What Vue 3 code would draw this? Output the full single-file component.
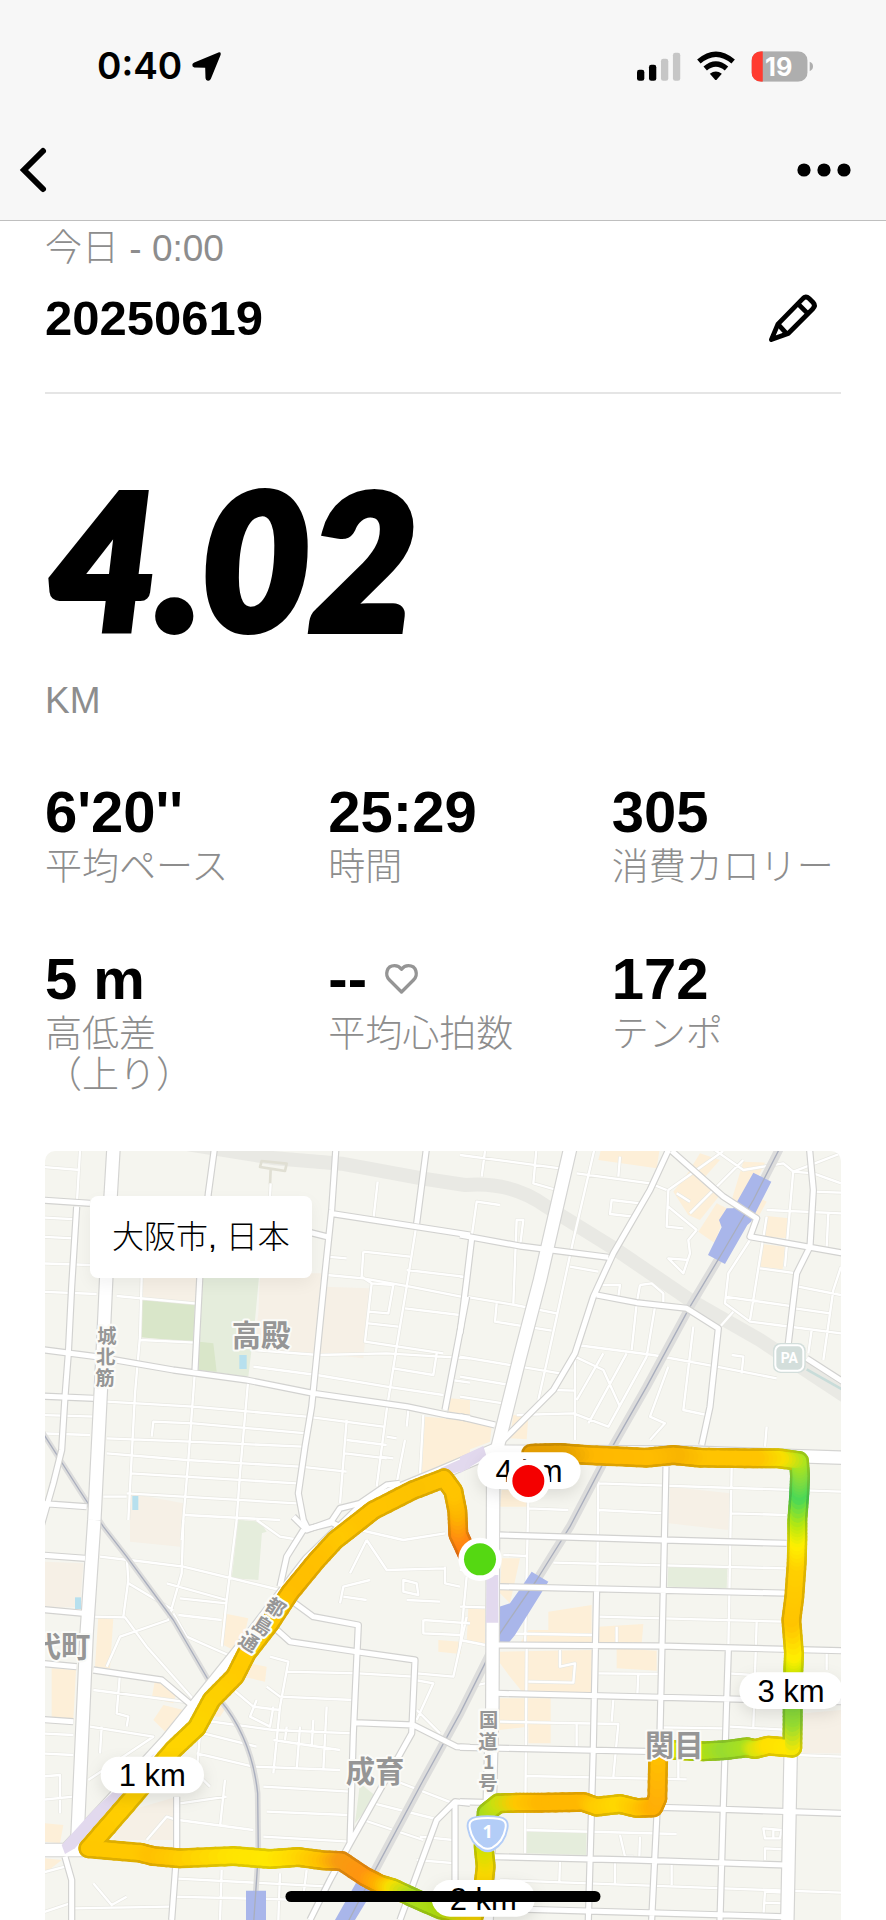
<script setup>
const stats = [
  { value: "6'20''", label: '平均ペース' },
  { value: '25:29', label: '時間' },
  { value: '305', label: '消費カロリー' },
  { value: '5 m', label: '高低差\n（上り）' },
  { value: '--', label: '平均心拍数', heart: true },
  { value: '172', label: 'テンポ' },
]

// The map is drawn in four quadrants, each with its own origin.
const tiles = [
  {
    at: 'translate(-15 -33)',
    major: 'M222 0L204 300L192 560L180 800L163 1140',
    mid: 'M0 180L150 190M110 200L95 440L85 640L75 770L65 930L40 1030L0 1170M0 628L170 650L400 690L620 720L820 760L1100 800L1220 825L1290 835M524 20L505 160L480 400L465 690M888 20L875 210L855 400L835 600L815 800L795 920L775 1060L790 1140L805 1170M1160 20L1130 250M870 220L1290 285M1280 470L1215 810M0 768L160 775M800 275L860 290M0 1090L140 1100M790 1170L870 1150L900 1105L960 1090L1040 1035L1080 1030',
    minor: 'M0 80L120 90M120 33L110 200M0 232L110 238M0 290L100 295M0 370L150 375M0 455L170 462M230 468L465 490M305 410L300 590L285 760L265 1140M300 600L465 608M465 690L445 960L425 1200M625 715L600 1000L590 1140M640 630L835 645L1040 640L1290 655M640 680L830 705L1040 740L1210 765M860 405L970 415L1110 440L1290 475M970 335L1110 350M970 335L965 410L995 430L975 605L1210 640M1130 250L1100 440L1070 620L1040 810L1010 1040M1100 390L1270 410M1095 505L1260 525M200 785L460 800L800 830L1030 860M200 895L450 905L790 920M335 890L340 845L460 850L800 880M200 940L440 960L780 980L920 995M270 1000L770 1030M260 1060L770 1090M190 1070L260 1070M435 1125L720 1140M920 840L900 1090M920 900L1040 915M915 940L1040 955M1105 810L1100 860M1095 900L1070 1030M1150 825L1140 1000M1013 125L1000 240M1190 640L1180 705L1060 685M860 350L920 355M0 825L170 830M0 880L150 885M995 430L1060 435L1045 520L985 515M985 550L1075 560M1040 890L1070 895M1020 950L1060 955M692 130L690 170M1240 660L1235 720L1290 728',
    green: 'M490 400L658 400L645 540L625 710L475 690ZM595 1140L660 1145L680 1175L590 1200Z',
    deep: 'M305 480L465 490L460 605L300 592ZM478 605L520 610L530 695L475 690Z',
    beige: 'M310 400L475 400L467 490L305 480ZM660 400L845 400L835 640L640 630L655 520ZM850 440L990 445L975 605L970 655L835 640ZM270 1060L430 1090L428 1140L268 1140Z',
    orange: 'M1155 830L1290 840L1290 940L1145 1000ZM1230 775L1290 780L1290 825L1225 815Z',
    water: 'M598 645h22v42h-22zM277 1068h18v42h-18z',
    violet: 'M1200 985L1290 945L1290 985L1225 1005Z',
    blue: '',
  },
  {
    at: 'translate(1245 -33)',
    major: 'M332 20L240 420L180 650L112 925M100 935L700 938L1200 955',
    mid: 'M630 20L570 150L460 340L400 470L345 640L280 750L130 900M635 33L790 170L890 235L870 290L1180 345M1048 20L1060 150L1050 320L1010 400L985 610M0 285L180 318L445 352M35 295L20 420L0 580M410 465L530 488L680 505L775 565L750 800L725 915M1040 655L1180 745M0 830L105 855',
    minor: 'M0 45L300 85M230 20L220 130L290 150M75 33L65 110M350 100L570 130L620 150M405 20L340 300L275 600L235 780M35 290L50 185L120 195M180 320L190 240L170 240L160 490M0 410L15 412M15 470L165 495L290 520M110 490L105 545L275 572M330 380L415 395M455 180L540 190L520 230L450 222ZM480 50L475 110M670 265L620 260L625 150L790 33M625 200L710 270M850 60L690 220M750 20L850 90L970 70L1000 95L1143 40M1000 95L1060 100M710 270L685 300L690 340L670 400L625 355L685 360M920 210L1143 220M1000 90L975 380M900 385L1010 400M870 300L805 400L795 490L870 545L950 555L1143 580M920 230L870 540M1015 440L1143 465M1005 505L1110 520M795 470L1005 500M1143 380L1120 450L1090 660M1055 570L1045 640M540 435L575 430L610 460L610 495M540 435L530 490L515 630M415 435L480 435L475 470M585 500L560 650M350 615L580 645L770 680L950 715M345 650L430 690L480 800M345 650L345 900M430 640L350 780M500 640L385 850M560 650L445 860L340 820L170 825M625 680L570 830L615 850L570 900M700 560L670 810L740 825M280 750L345 752M0 650L300 700M0 710L150 735M0 770L130 790M920 860L915 920M815 645L850 650L845 700M780 560L820 515M650 160L690 185M1060 155L1143 158M1060 100L1143 130M1105 220L1100 320',
    green: '',
    deep: '',
    beige: '',
    orange: 'M425 20L600 20L590 85L415 60ZM720 40L780 60L735 110L695 80ZM690 90L780 165L720 240L685 225L640 155ZM850 65L915 68L850 205L815 180ZM770 190L800 205L765 310L715 275ZM920 228L988 235L980 295L915 290ZM905 312L975 320L968 388L900 380ZM890 170L920 185L890 240L870 225ZM160 825L205 830L200 898L150 895ZM0 780L30 780L30 820L0 815ZM0 840L95 860L90 905L0 940ZM125 1050L210 1050L205 1100L120 1100Z',
    water: '',
    violet: 'M0 950L70 918L80 950L0 1000Z',
    blue: 'M880 98L934 125L873 245L862 255L795 372L744 345L785 262L777 240L800 205L820 205Z',
  },
  {
    at: 'translate(-15 1107)',
    major: 'M163 0L140 340L112 960M0 990L130 990',
    mid: 'M0 105L135 115M0 268L130 280M0 430L110 440M160 450L365 480L460 560M0 598L100 605M765 250L820 290L955 315L940 640L930 970M700 320L750 365L950 395L1125 420L1115 640L930 970L870 1080L810 1200M945 608L1120 615L1250 680L1290 682M790 30L740 110L720 200M410 830L410 1000L395 1200M75 1010L95 1080L95 1200M1290 850L1245 845L1190 900L1080 1200M1245 845L1245 1100M760 -10L800 30L870 5L900 20',
    minor: 'M430 0L425 160L385 300L240 350L200 440M260 110L265 180L250 290M270 120L430 140L720 210M265 190L400 270M380 190L560 240M180 110L265 120M155 290L255 292L320 380L480 560M590 0L560 240L545 380M420 235L560 250M400 280L440 350L530 390L600 420M415 285L545 300M740 455L955 460L1120 470M690 410L745 425L720 560L700 760M680 500L720 530L940 540M860 560L850 750M780 620L770 750M700 660L900 690M545 480L640 560L720 570M480 600L700 630L940 640M490 640L650 680M470 700L640 740L900 750M670 800L930 815M680 875L925 885M670 950L930 965M555 780L540 920M420 850L560 830M415 900L640 930M320 960L380 890L410 900M160 510L470 550M240 460L230 580L265 590L260 620M150 620L340 650L145 780M185 620L180 700M0 640L100 645M0 700L100 705M0 770L60 765L60 880M0 840L100 830M900 250L910 200L990 180M910 230L980 240M1090 180L1130 190L1135 225L1090 215ZM1100 240L1200 245M1150 300L1290 310M1150 300L1150 340L1260 345M980 60L1040 150L1215 145M980 60L930 160M960 30L1090 60L1215 40M1215 140L1215 190L1260 200M1125 480L1180 490L1130 600M1130 570L1200 640M1280 290L1240 470L1130 460M650 0L720 50L780 60M700 560L690 620L630 590L650 540M740 620L735 660M820 600L815 680M1060 780L1240 850M1000 850L1200 900M970 900L1150 960M400 1075L870 1100M400 1130L800 1140M545 1050L540 1200M800 1050L790 1130M720 1060L715 1200M100 1165L390 1160M160 1090L215 1155L260 1130M0 1060L75 1040M0 1180L90 1150M1250 900L1240 960L1140 950M1130 1020L1250 1030M480 640L470 760L510 800',
    green: 'M595 0L668 10L655 180L575 175ZM960 790L1010 830L945 910Z',
    deep: '',
    beige: 'M0 125L130 130L120 260L0 265ZM270 0L430 0L420 80L270 65ZM240 880L410 830L400 960L220 960Z',
    orange: 'M550 280L625 295L600 400L540 370ZM630 430L680 440L675 485L610 470ZM175 290L220 295L210 445L165 440ZM35 445L108 450L100 600L35 590ZM345 480L410 520L400 550L335 535ZM370 555L430 570L380 640L340 600ZM15 910L70 915L60 970L15 965ZM1195 360L1262 365L1262 402L1195 395ZM15 1015L65 1020L15 1060ZM540 540L560 560L540 590L510 590Z',
    water: 'M105 232h18v35h-18z',
    violet: 'M345 700L160 870L65 975L75 1002L105 985L250 820Z',
    blue: 'M618 1112h60v100h-60zM950 1085L1000 1110L945 1200L885 1200Z',
  },
  {
    at: 'translate(1245 1107)',
    major: 'M100 -220L97 560L80 1200M992 700L982 1200',
    mid: 'M120 45L610 60L980 70M120 200L1000 220M110 375L600 378L1143 392M110 520L1143 545M0 682L600 695M0 845L700 865L1143 880M100 1010L520 1020L975 1035M90 1165L970 1190M618 -160L610 200L600 640L590 900L575 1200M410 200L400 680L385 1200M805 390L790 860L780 1200',
    minor: 'M415 -160L412 200M815 -160L805 390M205 -60L195 380M200 380L195 1000M415 -110L1143 -85M415 -30L615 -20M815 -20L980 -15M205 -35L325 -30M280 128L975 145M415 290L975 305M415 460L600 462M205 485L340 488L345 430L300 440L300 390M535 460L532 525M120 605L475 612L460 770M460 540L455 605M350 610L350 680M195 768L680 778M655 720L655 775M605 622L790 625M805 460L880 465M890 305L880 620M1100 400L1100 450M120 340L400 345M470 320L470 375M810 620L990 630M200 930L650 942M480 945L495 1010L520 1010M540 950L538 1010M300 1025L298 1085M465 1025L465 1090M635 1030L635 1095M120 1080L1143 1118M965 930L910 925L915 955L960 955ZM970 988L915 985L915 1020M970 1118L915 1115L910 1190M970 1150L915 1148M1005 705L1143 710M130 105L200 108M0 260L75 262M0 360L75 375M20 170L0 380M0 150L75 160M30 500L75 490M940 930L940 955',
    green: 'M625 140L802 145L800 205L622 200ZM200 935L380 935L378 1005L198 1000Z',
    deep: '',
    beige: 'M630 -100L810 -80L805 30L625 10ZM1030 580L1143 570L1143 700L1030 700Z',
    orange: 'M125 115L180 115L150 250L120 220ZM265 275L395 255L395 370L180 370L205 330L265 330ZM415 320L550 312L545 372L415 372ZM470 385L590 392L590 452L470 445ZM120 395L395 390L395 520L190 520L150 470L120 430ZM118 535L272 535L272 670L205 670L205 620L118 630ZM25 260L75 260L75 370L20 370Z',
    water: '',
    violet: 'M80 165L115 165L115 308L78 308Z',
    blue: 'M215 155L265 185L165 345L145 370L118 370L118 260L150 250L185 200Z',
  },
]

// Route vertices: x, y, pace colour.
const track = [
  [1270, 1215, 'ff7010'], [1240, 1150, 'ff8a10'], [1237, 1080, 'fdb400'], [1225, 1020, 'ffc400'], [1197, 982, 'ffc400'],
  [1105, 1017, 'fcc200'], [985, 1078, 'ffc400'], [925, 1125, 'ffc400'], [870, 1168, 'ffc800'], [815, 1228, 'ffc000'], [735, 1325, 'ffbe00'],
  [675, 1417, 'ffc800'], [605, 1507, 'ffcc00'], [570, 1576, 'ffca00'], [500, 1647, 'fdd000'], [455, 1730, 'fdd400'],
  [385, 1796, 'ffd400'], [245, 1960, 'ffd000'], [130, 2092, 'ffc800'], [285, 2105, 'ffc800'], [325, 2115, 'ffc000'],
  [405, 2122, 'ffcc00'], [565, 2115, 'ffe400'], [675, 2124, 'ffe800'], [760, 2118, 'ffd800'], [835, 2128, 'ffc000'],
  [890, 2130, 'f79c10'], [960, 2177, 'ff9410'], [1005, 2200, 'ffb000'], [1045, 2212, 'f8e000'], [1105, 2240, 'a8dc20'],
  [1185, 2275, 'b0e010'], [1285, 2300, 'f0d000'], [1315, 2207, 'ffd400'], [1322, 2147, 'f8d800'], [1316, 2087, 'd8e000'],
  [1325, 1985, 'a8dc20'], [1360, 1957, 'c8e010'], [1425, 1955, 'ffc800'], [1490, 1955, 'ffb800'], [1615, 1953, 'ffb800'],
  [1655, 1967, 'ffcc00'], [1725, 1959, 'ffd800'], [1775, 1971, 'ffc800'], [1825, 1969, 'ffb000'], [1837, 1942, 'ffae08'],
  [1840, 1797, 'ffc000'], [1895, 1797, 'dce600'], [1975, 1801, 'b4e010'], [2045, 1797, '98dc30'], [2105, 1789, 'a8e020'],
  [2130, 1794, 'd8e410'], [2170, 1784, 'ffe000'], [2242, 1790, 'ffe800'], [2243, 1707, '98dc30'], [2243, 1640, '80d840'],
  [2245, 1557, 'c8e800'], [2247, 1507, 'fff000'], [2239, 1407, 'ffc400'], [2248, 1337, 'ffc800'], [2255, 1237, 'ffd000'],
  [2257, 1167, 'fff000'], [2257, 1107, 'b8e810'], [2263, 1027, '48d858'], [2265, 975, '80dc40'], [2262, 930, 'a8e420'],
  [2200, 922, 'f8e000'], [2125, 922, 'ffc400'], [1965, 920, 'ffc400'], [1885, 912, 'f8b400'], [1805, 920, 'ffbc00'],
  [1625, 912, 'ffb800'], [1545, 906, 'e8a400'], [1458, 908, 'e8a000'],
]

const channels = (hex) => [0, 2, 4].map((i) => parseInt(hex.slice(i, i + 2), 16))
const segments = track.slice(1).flatMap(([x2, y2, c2], i) => {
  const [x1, y1, c1] = track[i]
  const a = channels(c1)
  const b = channels(c2)
  const steps = 6
  return Array.from({ length: steps }, (_, k) => {
    const s = k / steps
    const e = (k + 1) / steps
    const rgb = a.map((v, n) => Math.round(v + (b[n] - v) * (s + e) / 2))
    return {
      d: `M${x1 + (x2 - x1) * s} ${y1 + (y2 - y1) * s}L${x1 + (x2 - x1) * e} ${y1 + (y2 - y1) * e}`,
      color: `rgb(${rgb})`,
      edge: `rgb(${rgb.map((v) => Math.round(v * 0.87))})`,
    }
  })
})

const markers = [
  { text: '4 km', x: 1297, y: 904 },
  { text: '1 km', x: 167, y: 1817 },
  { text: '2 km', x: 1160, y: 2187 },
  { text: '3 km', x: 2083, y: 1564 },
]

const places = [
  { text: '高殿', x: 648, y: 584 },
  { text: '代町', x: 48, y: 1518 },
  { text: '成育', x: 990, y: 1892 },
  { text: '関目', x: 1888, y: 1816 },
]

const streets = [
  { text: '城', x: 186, y: 576 }, { text: '北', x: 182, y: 640 }, { text: '筋', x: 180, y: 702 },
  { text: '都', x: 692, y: 1390, turn: 32 }, { text: '島', x: 652, y: 1446, turn: 32 }, { text: '通', x: 612, y: 1494, turn: 32 },
  { text: '国', x: 1331, y: 1728 }, { text: '道', x: 1329, y: 1793 }, { text: '1', x: 1331, y: 1854 }, { text: '号', x: 1329, y: 1918 },
]
</script>

<template>
  <div class="screen">
    <header class="top">
      <div class="status">
        <div class="clock">
          <span>0:40</span>
          <svg class="arrow" viewBox="0 0 88 88" aria-hidden="true">
            <path d="M82 1Q89 0 87 8L57 82Q54 88 48 87Q42 87 41 80L40 48L7 47Q0 46 1 39Q1 34 7 32Z" />
          </svg>
        </div>
        <svg class="signals" viewBox="0 0 529 92" role="img" aria-label="電波 Wi-Fi バッテリー">
          <rect x="0" y="56" width="22" height="33" rx="7" />
          <rect x="36" y="41" width="22" height="48" rx="7" />
          <rect class="dim" x="72" y="23" width="22" height="66" rx="7" />
          <rect class="dim" x="108" y="5" width="22" height="84" rx="7" />
          <g class="waves">
            <path d="M186 31Q237 -13 289 31" />
            <path d="M205 52Q237 25 269 52" />
          </g>
          <path d="M219 68Q237 54 255 68L240 85Q237 88 234 85Z" />
          <clipPath id="cell"><rect x="344" y="0" width="169" height="92" rx="29" /></clipPath>
          <g clip-path="url(#cell)">
            <rect class="cell" x="344" y="0" width="169" height="92" />
            <rect class="charge" x="344" y="0" width="34" height="92" />
          </g>
          <path class="cell" d="M519 32Q529 36 529 46T519 60Z" />
          <text class="percent" x="426" y="74">19</text>
        </svg>
      </div>
      <nav class="nav">
        <button type="button" aria-label="戻る">
          <svg class="back" viewBox="0 0 26 44"><path d="M23 3L4 22L23 41" /></svg>
        </button>
        <button type="button" aria-label="メニュー">
          <svg class="more" viewBox="0 0 54 14"><circle cx="7" cy="7" r="6.6" /><circle cx="27" cy="7" r="6.6" /><circle cx="47" cy="7" r="6.6" /></svg>
        </button>
      </nav>
    </header>

    <main class="content">
      <p class="caption">今日 - 0:00</p>
      <div class="heading">
        <h1>20250619</h1>
        <button type="button" aria-label="編集">
          <svg class="pencil" viewBox="0 0 140 140">
            <path d="M7 133L26 88L98 14Q107 4 117 13L128 24Q137 34 128 43L56 115Z" />
            <path d="M84 28L114 58M26 88L52 116" />
          </svg>
        </button>
      </div>

      <p class="distance">4.02</p>
      <p class="caption unit">KM</p>

      <dl class="stats">
        <div v-for="s in stats" :key="s.label" class="stat">
          <dd>
            {{ s.value }}
            <svg v-if="s.heart" class="heart" viewBox="0 0 98 90" aria-hidden="true">
              <path d="M49 84L13 48C-2 33 4 5 28 5C38 5 44 9 49 16C54 9 60 5 70 5C94 5 100 33 85 48Z" />
            </svg>
          </dd>
          <dt>{{ s.label }}</dt>
        </div>
      </dl>

      <section class="map">
        <svg class="canvas" viewBox="0 0 2388 2307" role="img" aria-label="ルートマップ">
          <g v-for="t in tiles" :key="t.at" :transform="t.at">
            <path class="beige" :d="t.beige" />
            <path class="orange" :d="t.orange" />
            <path class="green" :d="t.green" />
            <path class="deep" :d="t.deep" />
            <path class="water" :d="t.water" />
          </g>
          <path class="highway" d="M430 -20L690 22L890 38L1130 82L1260 102Q1400 90 1505 167L1715 297L1935 447L2145 567L2400 735" />
          <path class="creek" d="M2285 655L2400 720" />
          <path class="depot" d="M650 30L725 38L720 60L690 55L645 48ZM677 55L675 100" />
          <g v-for="t in tiles" :key="t.at" :transform="t.at"><path class="minor-edge" :d="t.minor" /></g>
          <g v-for="t in tiles" :key="t.at" :transform="t.at"><path class="minor" :d="t.minor" /></g>
          <g class="rail">
            <path d="M2205 -10L2125 147L2035 300L1935 467L1805 707L1685 917L1575 1127L1475 1287L1365 1447L1245 1687L1135 1887L985 2167L900 2330" />
            <path class="thin" d="M-10 840L105 1020L175 1127L245 1217L385 1407L525 1647Q620 1760 638 1927L640 2107L625 2330" />
          </g>
          <g v-for="t in tiles" :key="t.at" :transform="t.at"><path class="blue" :d="t.blue" /></g>
          <g class="track">
            <path d="M2205 -10L2125 147L2035 300L1935 467L1805 707L1685 917L1575 1127L1475 1287L1365 1447L1245 1687L1135 1887L985 2167L900 2330" />
            <path d="M-10 840L105 1020L175 1127L245 1217L385 1407L525 1647Q620 1760 638 1927L640 2107L625 2330" />
          </g>
          <path class="major-edge" d="M1365 890L1185 967L970 1055L790 1230L590 1490L365 1770L70 2090" />
          <g v-for="t in tiles" :key="t.at" :transform="t.at">
            <path class="mid-edge" :d="t.mid" />
            <path class="major-edge" :d="t.major" />
          </g>
          <g v-for="t in tiles" :key="t.at" :transform="t.at">
            <path class="mid" :d="t.mid" />
            <path class="major" :d="t.major" />
          </g>
          <path class="major" d="M1365 890L1185 967L970 1055L790 1230L590 1490L365 1770L70 2090" />
          <g v-for="t in tiles" :key="t.at" :transform="t.at"><path class="violet" :d="t.violet" /></g>

          <g class="route">
            <path v-for="(s, i) in segments" :key="i" :d="s.d" :stroke="s.edge" stroke-width="60" />
            <path v-for="(s, i) in segments" :key="i" :d="s.d" :stroke="s.color" stroke-width="44" />
          </g>

          <text v-for="p in places" :key="p.text" class="place" :x="p.x" :y="p.y">{{ p.text }}</text>
          <text v-for="s in streets" :key="s.text" class="street" :x="s.x" :y="s.y" :transform="`rotate(${s.turn || 0} ${s.x} ${s.y - 21})`">{{ s.text }}</text>

          <g class="parking">
            <rect x="2184" y="576" width="98" height="90" rx="22" />
            <rect class="frame" x="2191" y="583" width="84" height="76" rx="17" />
            <text x="2233" y="637">PA</text>
          </g>
          <g class="shield">
            <path class="outer" d="M1328 1993Q1371 1993 1383 2004Q1394 2014 1390 2033Q1382 2077 1346 2099Q1328 2108 1310 2099Q1274 2077 1266 2033Q1262 2014 1273 2004Q1285 1993 1328 1993Z" />
            <path class="inner" d="M1328 2001Q1367 2001 1377 2010Q1385 2017 1381 2034Q1374 2072 1342 2090Q1328 2097 1314 2090Q1282 2072 1275 2034Q1271 2017 1279 2010Q1289 2001 1328 2001Z" />
            <text x="1328" y="2061">1</text>
          </g>

          <g v-for="m in markers" :key="m.text" class="marker">
            <rect :x="m.x" :y="m.y" width="310" height="110" rx="55" />
            <text :x="m.x + 155" :y="m.y + 89">{{ m.text }}</text>
          </g>
          <g class="pin">
            <circle cx="1305" cy="1225" r="65" />
            <circle class="start" cx="1305" cy="1225" r="48" />
            <circle cx="1450" cy="990" r="65" />
            <circle class="finish" cx="1450" cy="990" r="48" />
          </g>
        </svg>
        <p class="city">大阪市, 日本</p>
      </section>
    </main>
    <div class="home"></div>
  </div>
</template>

<style>
body {
  margin: 0;
  background: #fff;
}
</style>

<style scoped>
.screen {
  min-height: 100vh;
  color: #000;
  background: #fff;
  font-family: "Liberation Sans", "Noto Sans CJK JP", sans-serif;
}
p, h1, dl, dd, dt { margin: 0; }
svg { display: block; overflow: visible; }
button {
  display: flex;
  padding: 0;
  border: 0;
  background: none;
  cursor: pointer;
}

.top {
  position: sticky;
  top: 0;
  z-index: 2;
  background: #f7f7f7;
  border-bottom: 1px solid #bfbfbf;
}
.status {
  display: flex;
  justify-content: space-between;
  align-items: center;
  height: 32px;
  padding: 50px 73px 0 97px;
}
.clock {
  display: flex;
  align-items: center;
  gap: 10px;
  font: 600 37px/32px Inter, sans-serif;
}
.arrow { width: 29px; height: 29px; }
.signals { width: 176px; height: 31px; }
.dim { fill: #c6c6c6; }
.waves { fill: none; stroke: #000; stroke-width: 16; }
.cell { fill: #aeaeae; }
.charge { fill: #ff3b30; }
.percent {
  fill: #fff;
  font: 700 76px Inter, sans-serif;
  text-anchor: middle;
}
.nav {
  display: flex;
  justify-content: space-between;
  align-items: center;
  height: 44px;
  padding: 66px 35px 28px 20px;
}
.back { width: 26px; height: 44px; fill: none; stroke: #000; stroke-width: 6; stroke-linecap: round; }
.more { width: 54px; height: 14px; }

.content { padding: 7px 45px 0; }
.caption {
  color: #8d8d8d;
  font-size: 37px;
  line-height: 42px;
  font-weight: 300;
}
.heading {
  display: flex;
  justify-content: space-between;
  align-items: center;
  margin-top: 19px;
  padding: 0 24px 45px 0;
  border-bottom: 2px solid #e5e5e5;
}
h1 { font-size: 49px; line-height: 58px; font-weight: 700; }
.pencil { width: 48px; height: 48px; fill: none; stroke: #000; stroke-width: 14; stroke-linejoin: round; }
.distance {
  margin-top: 69px;
  padding-left: 4px;
  font: italic 900 186px/190px Lato, sans-serif;
  -webkit-text-stroke: 8px #000;
}
.unit { margin-top: 27px; }

.stats {
  display: grid;
  grid-template-columns: repeat(3, 1fr);
  gap: 62px 54px;
  margin-top: 61px;
}
.stat { display: flex; flex-direction: column; gap: 6px; }
dd {
  display: flex;
  align-items: center;
  gap: 18px;
  font-size: 58px;
  line-height: 58px;
  font-weight: 700;
}
.heart { width: 33px; height: 30px; fill: none; stroke: #959595; stroke-width: 10; stroke-linejoin: round; }
dt {
  color: #8d8d8d;
  font-size: 37px;
  line-height: 41px;
  font-weight: 300;
  white-space: pre;
}

.map {
  position: relative;
  margin-top: 55px;
  overflow: hidden;
  border-radius: 10px 10px 0 0;
  background: #f5f5ef;
}
.canvas { width: 100%; height: auto; }
.canvas path { stroke-linejoin: round; }
.beige { fill: #f6f0e6; }
.orange { fill: #fdefd8; }
.green { fill: #e5eddc; }
.deep { fill: #d9e6c9; }
.water { fill: #b7e0ee; }
.violet { fill: #e2d9ee; }
.blue { fill: #a9b6ea; }
.highway { fill: none; stroke: #e9e9e4; stroke-width: 42; }
.creek { fill: none; stroke: #c8dcd9; stroke-width: 8; }
.depot { fill: none; stroke: #e0dfd3; stroke-width: 8; }
.minor-edge { fill: none; stroke: #e8e8e2; stroke-width: 11; }
.minor { fill: none; stroke: #fff; stroke-width: 7; }
.mid-edge { fill: none; stroke: #d2d2d0; stroke-width: 22; }
.mid { fill: none; stroke: #fff; stroke-width: 15; }
.major-edge { fill: none; stroke: #d4d4d2; stroke-width: 44; }
.major { fill: none; stroke: #fff; stroke-width: 37; }
.rail { fill: none; stroke: #dddddc; stroke-width: 26; }
.rail .thin { stroke-width: 17; }
.track { fill: none; stroke: #a9aebd; stroke-width: 4; }
.route { fill: none; stroke-linecap: round; }

.place, .street {
  fill: #969696;
  stroke: #fbfbf8;
  paint-order: stroke;
  stroke-linejoin: round;
  text-anchor: middle;
  font-family: "Noto Sans CJK JP", sans-serif;
}
.place { font-size: 88px; font-weight: 700; stroke-width: 12; }
.street { font-size: 58px; font-weight: 700; stroke-width: 14; }
.parking rect { fill: #d3dedb; }
.parking .frame { stroke: #fff; stroke-width: 6; }
.parking text { fill: #fff; font: 700 42px Roboto, sans-serif; text-anchor: middle; }
.outer { fill: #b3cdf7; }
.inner { fill: #b3cdf7; stroke: #fff; stroke-width: 6; }
.shield text { fill: #fff; font: 700 54px "Noto Sans", sans-serif; text-anchor: middle; }
.marker rect { fill: #fff; filter: drop-shadow(0 16px 22px rgba(0, 0, 0, 0.1)); }
.marker text { font-size: 93px; text-anchor: middle; }
.pin circle { fill: #fff; }
.pin circle.start { fill: #55d812; }
.pin circle.finish { fill: #f40000; }
.city {
  position: absolute;
  top: 45px;
  left: 45px;
  padding: 20px 22px;
  border-radius: 8px;
  background: #fff;
  box-shadow: 0 6px 16px rgba(0, 0, 0, 0.05);
  font-size: 32px;
  line-height: 42px;
  font-weight: 300;
}
.home {
  position: fixed;
  bottom: 18px;
  left: 50%;
  z-index: 3;
  width: 315px;
  height: 11px;
  border-radius: 6px;
  background: #000;
  transform: translateX(-50%);
}
</style>
